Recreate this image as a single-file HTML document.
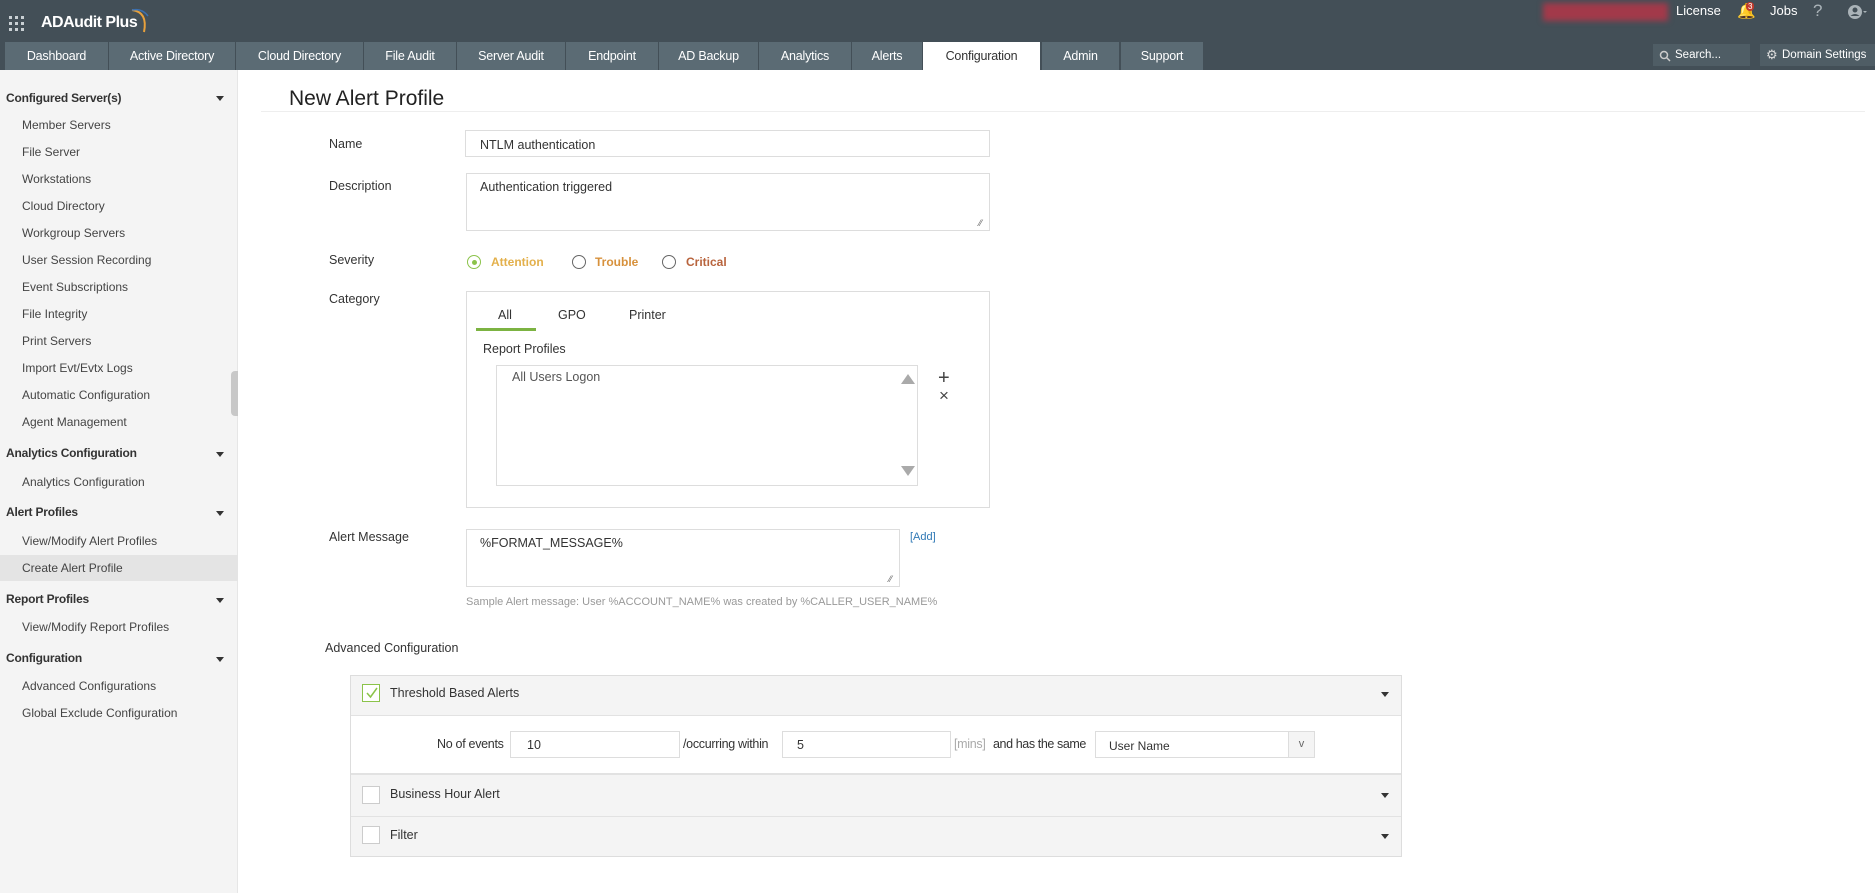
<!DOCTYPE html>
<html><head><meta charset="utf-8"><style>
*{box-sizing:border-box;margin:0;padding:0}
body{width:1875px;height:893px;position:relative;overflow:hidden;background:#fff;font-family:"Liberation Sans",sans-serif;font-size:12.5px;color:#333}
.a{position:absolute;white-space:nowrap}
#top{position:absolute;left:0;top:0;width:1875px;height:70px;background:#434f57}
.tab{position:absolute;top:42px;height:28px;background:#5b6b74;color:#fff;font-size:12.5px;line-height:28px;text-align:center;letter-spacing:-0.2px}
.tab.on{background:#fff;color:#333}
#side{position:absolute;left:0;top:70px;width:238px;height:823px;background:#f4f4f4;border-right:1px solid #e6e6e6}
.sh{position:absolute;left:6px;font-weight:bold;font-size:12px;color:#333;letter-spacing:-0.2px}
.si{position:absolute;left:22px;font-size:12px;color:#444}
.car{position:absolute;left:216px;width:0;height:0;border-left:4px solid transparent;border-right:4px solid transparent;border-top:5px solid #333}
.lbl{position:absolute;left:329px;font-size:12.5px;color:#333}
.box{position:absolute;border:1px solid #ddd;background:#fff}
.rad{position:absolute;width:14px;height:14px;border:1.5px solid #666;border-radius:50%}
.pc{position:absolute;width:0;height:0;border-left:4px solid transparent;border-right:4px solid transparent;border-top:5px solid #333;left:1381px}
.cb{position:absolute;left:362px;width:18px;height:18px;border:1px solid #ccc;background:#fff}
</style></head><body>
<div id="top"></div>
<svg class="a" style="left:9px;top:16px" width="16" height="16"><g fill="#c9d0d4"><rect x="0" y="0" width="3" height="3"/><rect x="6" y="0" width="3" height="3"/><rect x="12" y="0" width="3" height="3"/><rect x="0" y="6" width="3" height="3"/><rect x="6" y="6" width="3" height="3"/><rect x="12" y="6" width="3" height="3"/><rect x="0" y="12" width="3" height="3"/><rect x="6" y="12" width="3" height="3"/><rect x="12" y="12" width="3" height="3"/></g></svg>
<div class="a" style="left:41px;top:14px;color:#fff;font-size:16px;font-weight:bold;letter-spacing:-0.5px">ADAudit Plus</div>
<svg class="a" style="left:130px;top:6px" width="24" height="30"><path d="M2 4 Q18 6 14 26" stroke="#e8a13c" stroke-width="2" fill="none"/><path d="M2 4 Q12 2 18 10" stroke="#3a6fb0" stroke-width="1.5" fill="none"/></svg>
<div class="a" style="left:1543px;top:3px;width:125px;height:18px;background:#a2394a;filter:blur(3px)"></div>
<div class="a" style="left:1676px;top:3px;color:#fff;font-size:13px">License</div>
<div class="a" style="left:1737px;top:2px;color:#e8a13c;font-size:15px">🔔</div>
<div class="a" style="left:1746px;top:2px;background:#c0392b;color:#fff;font-size:8px;border-radius:5px;padding:0 2px">3</div>
<div class="a" style="left:1770px;top:3px;color:#fff;font-size:13px">Jobs</div>
<div class="a" style="left:1813px;top:1px;color:#aab3b8;font-size:17px">?</div>
<svg class="a" style="left:1847px;top:4px" width="20" height="16"><circle cx="8" cy="8" r="7" fill="#aab3b8"/><circle cx="8" cy="6" r="2.5" fill="#434f57"/><path d="M3.5 12 Q8 8 12.5 12" fill="#434f57"/><path d="M16 7 l2 2 l2 -2" fill="#aab3b8"/></svg>

<div class="tab" style="left:5px;width:103px">Dashboard</div>
<div class="tab" style="left:109px;width:126px">Active Directory</div>
<div class="tab" style="left:236px;width:127px">Cloud Directory</div>
<div class="tab" style="left:364px;width:92px">File Audit</div>
<div class="tab" style="left:457px;width:108px">Server Audit</div>
<div class="tab" style="left:566px;width:92px">Endpoint</div>
<div class="tab" style="left:659px;width:99px">AD Backup</div>
<div class="tab" style="left:759px;width:92px">Analytics</div>
<div class="tab" style="left:852px;width:70px">Alerts</div>
<div class="tab on" style="left:923px;width:117px">Configuration</div>
<div class="tab" style="left:1042px;width:77px">Admin</div>
<div class="tab" style="left:1121px;width:82px">Support</div>
<div class="a" style="left:1653px;top:44px;width:97px;height:22px;background:#4f5d65;color:#fff;font-size:11.5px;line-height:22px;padding-left:22px">Search...</div>
<svg class="a" style="left:1659px;top:50px" width="12" height="12"><circle cx="5" cy="5" r="3.5" stroke="#ccc" stroke-width="1.5" fill="none"/><path d="M7.5 7.5 L11 11" stroke="#ccc" stroke-width="1.5"/></svg>
<div class="a" style="left:1760px;top:44px;width:115px;height:22px;background:#4f5d65;color:#fff;font-size:11.5px;line-height:22px;padding-left:22px">Domain Settings</div>
<div class="a" style="left:1766px;top:47px;color:#ddd;font-size:13px">⚙</div>

<div id="side"></div>
<div class="a" style="left:0;top:555px;width:238px;height:26px;background:#e4e4e4"></div>
<div class="a" style="left:231px;top:371px;width:7px;height:45px;background:#c8c8c8;border-radius:4px 0 0 4px"></div>
<div class="sh" style="top:91px">Configured Server(s)</div><div class="car" style="top:96px"></div>
<div class="si" style="top:118px">Member Servers</div>
<div class="si" style="top:145px">File Server</div>
<div class="si" style="top:172px">Workstations</div>
<div class="si" style="top:199px">Cloud Directory</div>
<div class="si" style="top:226px">Workgroup Servers</div>
<div class="si" style="top:253px">User Session Recording</div>
<div class="si" style="top:280px">Event Subscriptions</div>
<div class="si" style="top:307px">File Integrity</div>
<div class="si" style="top:334px">Print Servers</div>
<div class="si" style="top:361px">Import Evt/Evtx Logs</div>
<div class="si" style="top:388px">Automatic Configuration</div>
<div class="si" style="top:415px">Agent Management</div>
<div class="sh" style="top:446px">Analytics Configuration</div><div class="car" style="top:452px"></div>
<div class="si" style="top:475px">Analytics Configuration</div>
<div class="sh" style="top:505px">Alert Profiles</div><div class="car" style="top:511px"></div>
<div class="si" style="top:534px">View/Modify Alert Profiles</div>
<div class="si" style="top:561px">Create Alert Profile</div>
<div class="sh" style="top:592px">Report Profiles</div><div class="car" style="top:598px"></div>
<div class="si" style="top:620px">View/Modify Report Profiles</div>
<div class="sh" style="top:651px">Configuration</div><div class="car" style="top:657px"></div>
<div class="si" style="top:679px">Advanced Configurations</div>
<div class="si" style="top:706px">Global Exclude Configuration</div>

<div class="a" style="left:289px;top:87px;font-size:21px;color:#222">New Alert Profile</div>
<div class="a" style="left:261px;top:111px;width:1604px;height:1px;background:#eee"></div>

<div class="lbl" style="top:137px">Name</div>
<div class="box" style="left:465px;top:130px;width:525px;height:27px;padding:7px 14px">NTLM authentication</div>
<div class="lbl" style="top:179px">Description</div>
<div class="box" style="left:466px;top:173px;width:524px;height:58px;padding:6px 13px">Authentication triggered</div>
<div class="a" style="left:979px;top:218px;color:#666;font-size:9px">⁄⁄</div>
<div class="lbl" style="top:253px">Severity</div>
<div class="rad" style="left:467px;top:255px;border-color:#8bc34a"></div><div class="a" style="left:471.5px;top:259.5px;width:5px;height:5px;border-radius:50%;background:#8bc34a"></div>
<div class="a" style="left:491px;top:255px;color:#e3b04b;font-weight:bold;font-size:12px">Attention</div>
<div class="rad" style="left:572px;top:255px"></div>
<div class="a" style="left:595px;top:255px;color:#d7913c;font-weight:bold;font-size:12px">Trouble</div>
<div class="rad" style="left:662px;top:255px"></div>
<div class="a" style="left:686px;top:255px;color:#b8643d;font-weight:bold;font-size:12px">Critical</div>
<div class="lbl" style="top:292px">Category</div>
<div class="box" style="left:466px;top:291px;width:524px;height:217px"></div>
<div class="a" style="left:498px;top:308px">All</div>
<div class="a" style="left:476px;top:328px;width:60px;height:3px;background:#7cb342"></div>
<div class="a" style="left:558px;top:308px">GPO</div>
<div class="a" style="left:629px;top:308px">Printer</div>
<div class="a" style="left:483px;top:342px">Report Profiles</div>
<div class="box" style="left:496px;top:365px;width:422px;height:121px"></div>
<div class="a" style="left:512px;top:370px;color:#555">All Users Logon</div>
<div class="a" style="left:901px;top:374px;width:0;height:0;border-left:7px solid transparent;border-right:7px solid transparent;border-bottom:10px solid #aaa"></div>
<div class="a" style="left:901px;top:466px;width:0;height:0;border-left:7px solid transparent;border-right:7px solid transparent;border-top:10px solid #aaa"></div>
<div class="a" style="left:938px;top:367px;font-size:20px;color:#444">+</div>
<div class="a" style="left:939px;top:386px;font-size:17px;color:#444">×</div>
<div class="lbl" style="top:530px">Alert Message</div>
<div class="box" style="left:466px;top:529px;width:434px;height:58px;padding:6px 13px">%FORMAT_MESSAGE%</div>
<div class="a" style="left:889px;top:574px;color:#666;font-size:9px">⁄⁄</div>
<div class="a" style="left:910px;top:531px;color:#2f78b5;font-size:11px">[Add]</div>
<div class="a" style="left:466px;top:596px;color:#999;font-size:11px">Sample Alert message: User %ACCOUNT_NAME% was created by %CALLER_USER_NAME%</div>
<div class="a" style="left:325px;top:641px">Advanced Configuration</div>

<div class="a" style="left:350px;top:675px;width:1052px;height:182px;border:1px solid #ddd;background:#f4f4f4"></div>
<div class="a" style="left:351px;top:715px;width:1050px;height:60px;background:#fff;border-top:1px solid #e2e2e2;border-bottom:2px solid #e2e2e2"></div>
<div class="a" style="left:351px;top:816px;width:1050px;height:1px;background:#e2e2e2"></div>
<div class="cb" style="top:684px;border-color:#8bc34a"></div>
<svg class="a" style="left:365px;top:686px" width="14" height="14"><path d="M2 7 L5.5 11 L12 2" stroke="#8bc34a" stroke-width="1.5" fill="none"/></svg>
<div class="a" style="left:390px;top:686px">Threshold Based Alerts</div><div class="pc" style="top:692px"></div>
<div class="a" style="left:437px;top:737px;letter-spacing:-0.3px">No of events</div>
<div class="box" style="left:510px;top:731px;width:170px;height:27px;padding:6px 16px">10</div>
<div class="a" style="left:683px;top:737px;letter-spacing:-0.3px">/occurring within</div>
<div class="box" style="left:782px;top:731px;width:169px;height:27px;padding:6px 14px">5</div>
<div class="a" style="left:954px;top:737px;color:#aaa;letter-spacing:-0.3px">[mins]</div>
<div class="a" style="left:993px;top:737px;letter-spacing:-0.4px">and has the same</div>
<div class="box" style="left:1095px;top:731px;width:220px;height:27px;padding:7px 13px;font-size:12px">User Name</div>
<div class="a" style="left:1288px;top:732px;width:26px;height:25px;background:#f4f4f4;border-left:1px solid #ddd;text-align:center;line-height:24px;color:#666;font-size:11px">v</div>
<div class="cb" style="top:786px"></div>
<div class="a" style="left:390px;top:787px">Business Hour Alert</div><div class="pc" style="top:793px"></div>
<div class="cb" style="top:826px"></div>
<div class="a" style="left:390px;top:828px">Filter</div><div class="pc" style="top:834px"></div>
</body></html>
